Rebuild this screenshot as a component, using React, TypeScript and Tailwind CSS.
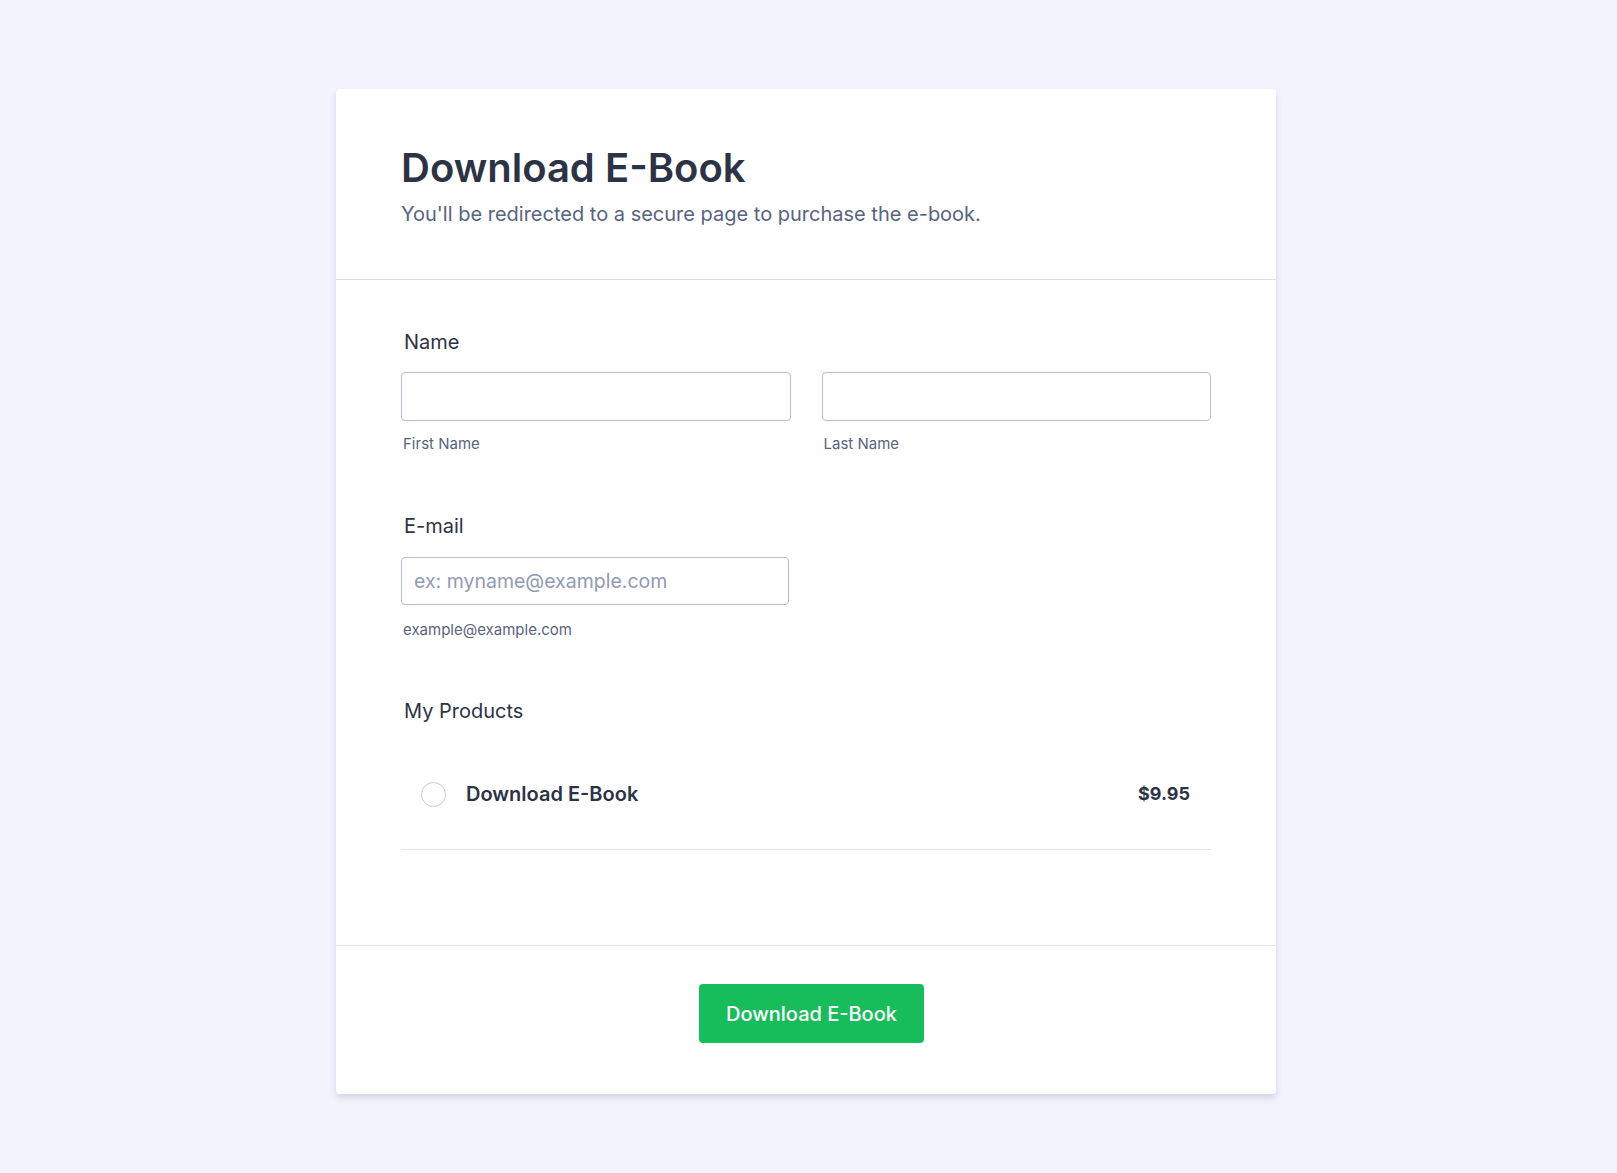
export default function App() {
  return (
    <div className="min-h-screen bg-[#f3f3fe] pt-[89px] pb-[79px] font-['Inter',sans-serif] text-[#2c3345]">
      <div className="ml-[336px] w-[940px] rounded-[4px] bg-white shadow-[0_4px_6px_rgba(42,53,102,0.16)]">
        {/* Header */}
        <div className="border-b border-[#dadde6] px-[65px] pt-[55px] pb-[50px]">
          <h1 className="text-[40px] leading-[48px] font-semibold text-[#2c3345]">Download E-Book</h1>
          <p className="mt-[7px] text-[20px] leading-[30px] text-[#57647e]">
            You'll be redirected to a secure page to purchase the e-book.
          </p>
        </div>

        {/* Form body */}
        <div className="px-[65px] pt-[50px] pb-[95px]">
          {/* Name */}
          <label className="block pl-[3px] text-[20px] leading-[24px] text-[#2c3345]">Name</label>
          <div className="mt-[18px] grid grid-cols-2 gap-[31px]">
            <div>
              <input className="block h-[49px] w-full rounded-[4px] border border-[#b8bdc9] bg-white px-3 text-[18px] outline-none" />
              <span className="mt-[13px] block pl-[2px] text-[15px] leading-[20px] text-[#57647e]">First Name</span>
            </div>
            <div>
              <input className="block h-[49px] w-full rounded-[4px] border border-[#b8bdc9] bg-white px-3 text-[18px] outline-none" />
              <span className="mt-[13px] block pl-[2px] text-[15px] leading-[20px] text-[#57647e]">Last Name</span>
            </div>
          </div>

          {/* E-mail */}
          <label className="mt-[60px] block pl-[3px] text-[20px] leading-[24px] text-[#2c3345]">E-mail</label>
          <div className="mt-[19px] w-[388px]">
            <input
              placeholder="ex: myname@example.com"
              className="block h-[48px] w-full rounded-[4px] border border-[#b8bdc9] bg-white px-[12px] text-[19.5px] outline-none placeholder:text-[#8f9bb3]"
            />
            <span className="mt-[15px] block pl-[2px] text-[15px] leading-[20px] text-[#57647e]">example@example.com</span>
          </div>

          {/* Products */}
          <label className="mt-[59px] block pl-[3px] text-[20px] leading-[24px] text-[#2c3345]">My Products</label>
          <div className="mt-[16px] flex h-[111px] items-center border-b border-[#e3e5ec] pl-[20px] pr-[21px]">
            <span className="h-[25px] w-[25px] shrink-0 rounded-full border border-[#c3cad8] bg-white" />
            <span className="ml-[20px] text-[20px] font-semibold text-[#2c3345]">Download E-Book</span>
            <span className="ml-auto -mt-[2px] text-[18px] font-bold text-[#2c3345]">$9.95</span>
          </div>
        </div>

        {/* Footer */}
        <div className="flex justify-center border-t border-[#e3e5ec] pt-[38px] pb-[51px] pl-[11px]">
          <button className="h-[59px] w-[225px] rounded-[4px] bg-[#18bd5b] text-[20px] font-medium text-white">
            Download E-Book
          </button>
        </div>
      </div>
    </div>
  )
}
